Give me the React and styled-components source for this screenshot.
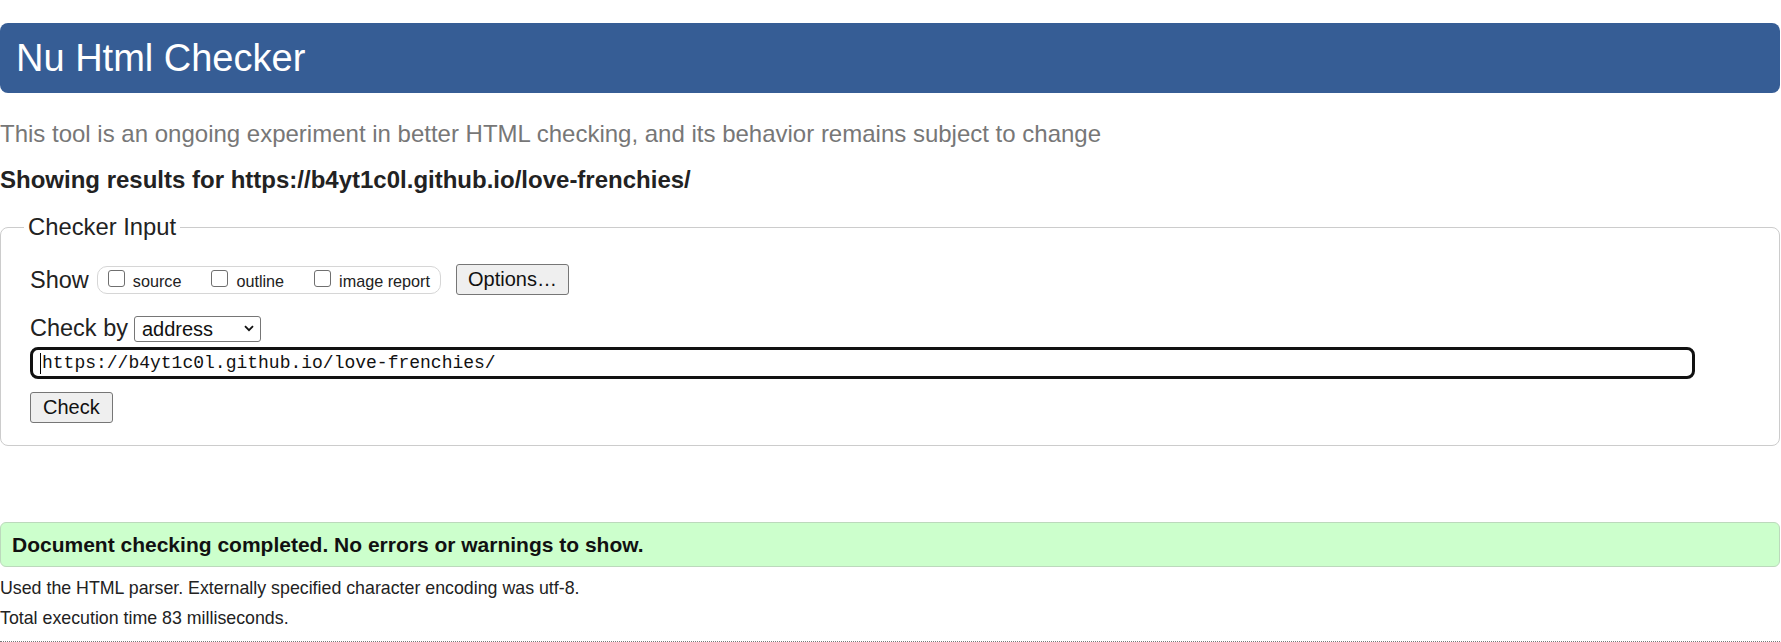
import React from "react";
import styled, { createGlobalStyle } from "styled-components";

const Global = createGlobalStyle`
  html, body { margin: 0; padding: 0; background: #fff; }
  body { font-family: "Liberation Sans", Arial, sans-serif; color: #222; }
  * { box-sizing: border-box; }
`;

const Page = styled.div`
  padding: 23px 1px 0 0;
  display: flex;
  flex-direction: column;
`;

const Header = styled.h1`
  margin: 0;
  height: 70px;
  line-height: 70px;
  padding-left: 16px;
  font-size: 38px;
  font-weight: normal;
  color: #fff;
  background: #365d95;
  border-radius: 8px;
`;

const Intro = styled.p`
  margin: 27px 0 0;
  font-size: 24px;
  line-height: 28px;
  color: #777;
`;

const Results = styled.p`
  margin: 18px 0 0;
  font-size: 24px;
  line-height: 28px;
  font-weight: bold;
  color: #222;
`;

const Fieldset = styled.fieldset`
  margin: 19px 0 0;
  padding: 0 0 22px 29px;
  border: 1px solid #ccc;
  border-radius: 8px;
  min-width: 0;
`;

const Legend = styled.legend`
  margin-left: -6px;
  padding: 0 4px;
  font-size: 23.8px;
  line-height: 28px;
  color: #222;
`;

const Row = styled.div`
  display: flex;
  align-items: ${(p) => p.$align || "center"};
  margin-top: ${(p) => p.$mt || 0}px;
`;

const RowLabel = styled.span`
  font-size: 23.5px;
  line-height: 28px;
  margin-right: ${(p) => p.$gap || 8}px;
`;

const CheckGroup = styled.div`
  display: flex;
  align-items: baseline;
  height: 28px;
  padding: 3px 10px 0 10px;
  border: 1px solid #d6d6d6;
  border-radius: 10px;
`;

const Option = styled.label`
  display: inline-flex;
  align-items: baseline;
  font-size: 16.2px;
  line-height: 18px;
  margin-left: ${(p) => (p.$first ? 0 : 30)}px;
  color: #222;
`;

const Box = styled.input.attrs({ type: "checkbox" })`
  appearance: none;
  -webkit-appearance: none;
  width: 17px;
  height: 17px;
  margin: 0 8px 1px 0;
  border: 1px solid #6f6f6f;
  border-radius: 3px;
  background: #fff;
  display: inline-block;
`;

const Button = styled.button`
  font-family: "Liberation Sans", Arial, sans-serif;
  font-size: 20px;
  height: 31px;
  padding: 0 ${(p) => p.$px || 11}px;
  margin-left: ${(p) => p.$ml || 0}px;
  background: #efefef;
  color: #111;
  border: 1px solid #767676;
  border-radius: 3px;
  line-height: 29px;
`;

const SelectWrap = styled.span`
  position: relative;
  display: inline-block;
`;

const Select = styled.select`
  appearance: none;
  -webkit-appearance: none;
  width: 127px;
  height: 26px;
  padding: 0 0 0 7px;
  font-family: "Liberation Sans", Arial, sans-serif;
  font-size: 20px;
  color: #111;
  background: #fff;
  border: 1px solid #767676;
  border-radius: 3px;
`;

const Chevron = styled.svg`
  position: absolute;
  right: 7px;
  top: 9px;
  pointer-events: none;
`;

const InputWrap = styled.div`
  position: relative;
  margin-top: 5px;
  width: 1665px;
`;

const UrlInput = styled.input`
  width: 100%;
  height: 32px;
  padding: 0 0 0 9px;
  font-family: "Liberation Mono", "DejaVu Sans Mono", monospace;
  font-size: 18px;
  color: #111;
  border: 3px solid #111;
  border-radius: 8px;
  outline: none;
  background: #fff;
`;

const Caret = styled.span`
  position: absolute;
  left: 10px;
  top: 6px;
  width: 1px;
  height: 21px;
  background: #000;
`;

const Success = styled.div`
  margin-top: 76px;
  height: 45px;
  line-height: 43px;
  padding-left: 11px;
  font-size: 21px;
  font-weight: bold;
  color: #111;
  background: #ccffcc;
  border: 1px solid #bcd9bc;
  border-radius: 6px;
`;

const Details = styled.div`
  margin-top: 6px;
`;

const Note = styled.p`
  margin: 0;
  font-size: 17.8px;
  line-height: 30px;
  color: #222;
`;

const Rule = styled.hr`
  margin: 8px 0 0;
  border: 0;
  border-top: 1px dotted #777;
  height: 0;
`;

export default function App() {
  return (
    <Page>
      <Global />
      <Header>Nu Html Checker</Header>
      <Intro>
        This tool is an ongoing experiment in better HTML checking, and its behavior remains subject to change
      </Intro>
      <Results>Showing results for https://b4yt1c0l.github.io/love-frenchies/</Results>
      <Fieldset>
        <Legend>Checker Input</Legend>
        <Row $mt={23}>
          <RowLabel>Show</RowLabel>
          <CheckGroup>
            <Option $first>
              <Box />
              source
            </Option>
            <Option>
              <Box />
              outline
            </Option>
            <Option>
              <Box />
              image report
            </Option>
          </CheckGroup>
          <Button $ml={15} $px={11}>Options…</Button>
        </Row>
        <Row $mt={19} $align="baseline">
          <RowLabel $gap={6}>Check by</RowLabel>
          <SelectWrap>
            <Select defaultValue="address">
              <option value="address">address</option>
              <option value="file">file upload</option>
              <option value="text">text input</option>
            </Select>
            <Chevron width="10" height="7" viewBox="0 0 10 7">
              <path d="M1 1.2 L5 5.2 L9 1.2" fill="none" stroke="#111" strokeWidth="1.8" />
            </Chevron>
          </SelectWrap>
        </Row>
        <InputWrap>
          <UrlInput readOnly value="https://b4yt1c0l.github.io/love-frenchies/" />
          <Caret />
        </InputWrap>
        <Row $mt={13}>
          <Button $px={12}>Check</Button>
        </Row>
      </Fieldset>
      <Success>Document checking completed. No errors or warnings to show.</Success>
      <Details>
        <Note>Used the HTML parser. Externally specified character encoding was utf-8.</Note>
        <Note>Total execution time 83 milliseconds.</Note>
      </Details>
      <Rule />
    </Page>
  );
}
